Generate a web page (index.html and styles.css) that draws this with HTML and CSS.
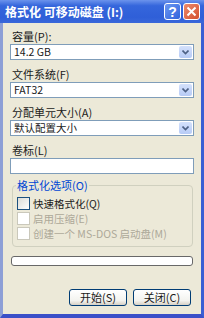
FILE: index.html
```html
<!DOCTYPE html>
<html lang="zh-CN">
<head>
    <meta charset="UTF-8">
    <title>格式化 可移动磁盘</title>
    <link rel="stylesheet" href="styles.css">
</head>
<body>
    <div class="window">
        <div class="titlebar">
            <span class="title">格式化 可移动磁盘 (I:)</span>
            <span class="tb-btn help">?</span>
            <span class="tb-btn close">
                <svg width="11" height="11" viewBox="0 0 11 11"><path d="M1.5 1.5 L9.5 9.5 M9.5 1.5 L1.5 9.5" stroke="#fff" stroke-width="2"/></svg>
            </span>
        </div>
        <div class="content">
            <div class="field">
                <div class="label">容量(P):</div>
                <div class="select"><span class="val">14.2 GB</span><span class="drop"><svg width="7" height="5" viewBox="0 0 7 5"><path d="M0.5 0.5 L3.5 3.5 L6.5 0.5" stroke="#4d6185" stroke-width="1.6" fill="none"/></svg></span></div>
            </div>
            <div class="field">
                <div class="label">文件系统(F)</div>
                <div class="select"><span class="val">FAT32</span><span class="drop"><svg width="7" height="5" viewBox="0 0 7 5"><path d="M0.5 0.5 L3.5 3.5 L6.5 0.5" stroke="#4d6185" stroke-width="1.6" fill="none"/></svg></span></div>
            </div>
            <div class="field">
                <div class="label">分配单元大小(A)</div>
                <div class="select"><span class="val">默认配置大小</span><span class="drop"><svg width="7" height="5" viewBox="0 0 7 5"><path d="M0.5 0.5 L3.5 3.5 L6.5 0.5" stroke="#4d6185" stroke-width="1.6" fill="none"/></svg></span></div>
            </div>
            <div class="field">
                <div class="label">卷标(L)</div>
                <div class="input"></div>
            </div>
            <div class="group">
                <span class="legend">格式化选项(O)</span>
                <div class="check"><span class="box"></span>快速格式化(Q)</div>
                <div class="check off"><span class="box"></span>启用压缩(E)</div>
                <div class="check off"><span class="box"></span>创建一个 MS-DOS 启动盘(M)</div>
            </div>
            <div class="progress"></div>
            <div class="buttons">
                <span class="btn">开始(S)</span>
                <span class="btn">关闭(C)</span>
            </div>
        </div>
    </div>
</body>
</html>
```

FILE: styles.css
```css
body{
    margin: 0;
    font-family: "Noto Sans CJK SC", "Liberation Sans", sans-serif;
    font-size: 11px;
    color: #1a1a1a;
}
.window{
    width: 204px;
    height: 318px;
    box-sizing: border-box;
    background: #ece9d8;
    border-left: 3px solid #8d9fd6;
    border-right: 3px solid #3a5fd4;
    border-bottom: 4px solid #3a50c8;
    display: flex;
    flex-direction: column;
}
.titlebar{
    height: 23px;
    margin: 0 -3px;
    padding: 0 4px 0 5px;
    background: linear-gradient(#6b93ec, #3566dc 25%, #2f5fd8 75%, #3a68da);
    display: flex;
    align-items: center;
}
.title{
    flex: 1;
    color: #fff;
    font-size: 12px;
    font-weight: bold;
    line-height: 16px;
}
.tb-btn{
    width: 15px;
    height: 15px;
    border: 1px solid #fff;
    border-radius: 3px;
    margin-left: 2px;
    display: flex;
    align-items: center;
    justify-content: center;
    color: #fff;
    font: bold 14px "Liberation Sans", sans-serif;
}
.help{
    background: linear-gradient(135deg, #6d98f2, #2f62dc);
}
.close{
    background: linear-gradient(135deg, #ec8a6c, #d4502e);
}
.content{
    flex: 1;
    padding: 6px 7px 0 7px;
    display: flex;
    flex-direction: column;
}
.field{
    margin-bottom: 7px;
}
.label{
    height: 14px;
    line-height: 14px;
    padding-left: 2px;
    margin-bottom: 1px;
}
.select,
.input{
    height: 16px;
    box-sizing: border-box;
    border: 1px solid #7f9db9;
    background: #fff;
    display: flex;
    align-items: center;
}
.val{
    flex: 1;
    padding-left: 3px;
    font-size: 10.5px;
    line-height: 14px;
}
.drop{
    width: 13px;
    height: 12px;
    margin-right: 1px;
    background: linear-gradient(#d4e1fc, #b7cbf6);
    border-radius: 2px;
    display: flex;
    align-items: center;
    justify-content: center;
}
.group{
    position: relative;
    margin: 4px 0 0 2px;
    width: 181px;
    height: 62px;
    box-sizing: border-box;
    border: 1px solid #d0d0bf;
    border-radius: 4px;
    padding: 10px 0 0 4px;
}
.legend{
    position: absolute;
    left: 3px;
    top: -8px;
    padding: 0 1px;
    background: #ece9d8;
    color: #0046d5;
    line-height: 14px;
}
.check{
    height: 15px;
    display: flex;
    align-items: center;
    line-height: 13px;
    font-size: 10.5px;
}
.box{
    width: 11px;
    height: 11px;
    border: 1px solid #1c5180;
    background: linear-gradient(135deg, #dcdcd7, #fff);
    margin-right: 3px;
}
.off{
    color: #aca899;
}
.off .box{
    border-color: #cac8bb;
    background: #fff;
}
.progress{
    margin: 9px 0 0 1px;
    width: 182px;
    height: 10px;
    box-sizing: border-box;
    border: 1px solid #686868;
    border-radius: 3px;
    background: #fff;
}
.buttons{
    margin-top: 23px;
    display: flex;
    justify-content: flex-end;
    gap: 6px;
    padding-right: 3px;
}
.btn{
    width: 58px;
    height: 17px;
    box-sizing: border-box;
    border: 1px solid #003c74;
    border-radius: 3px;
    background: linear-gradient(#fff, #f3f3ef 70%, #d6d0c5);
    text-align: center;
    line-height: 15px;
}
```
